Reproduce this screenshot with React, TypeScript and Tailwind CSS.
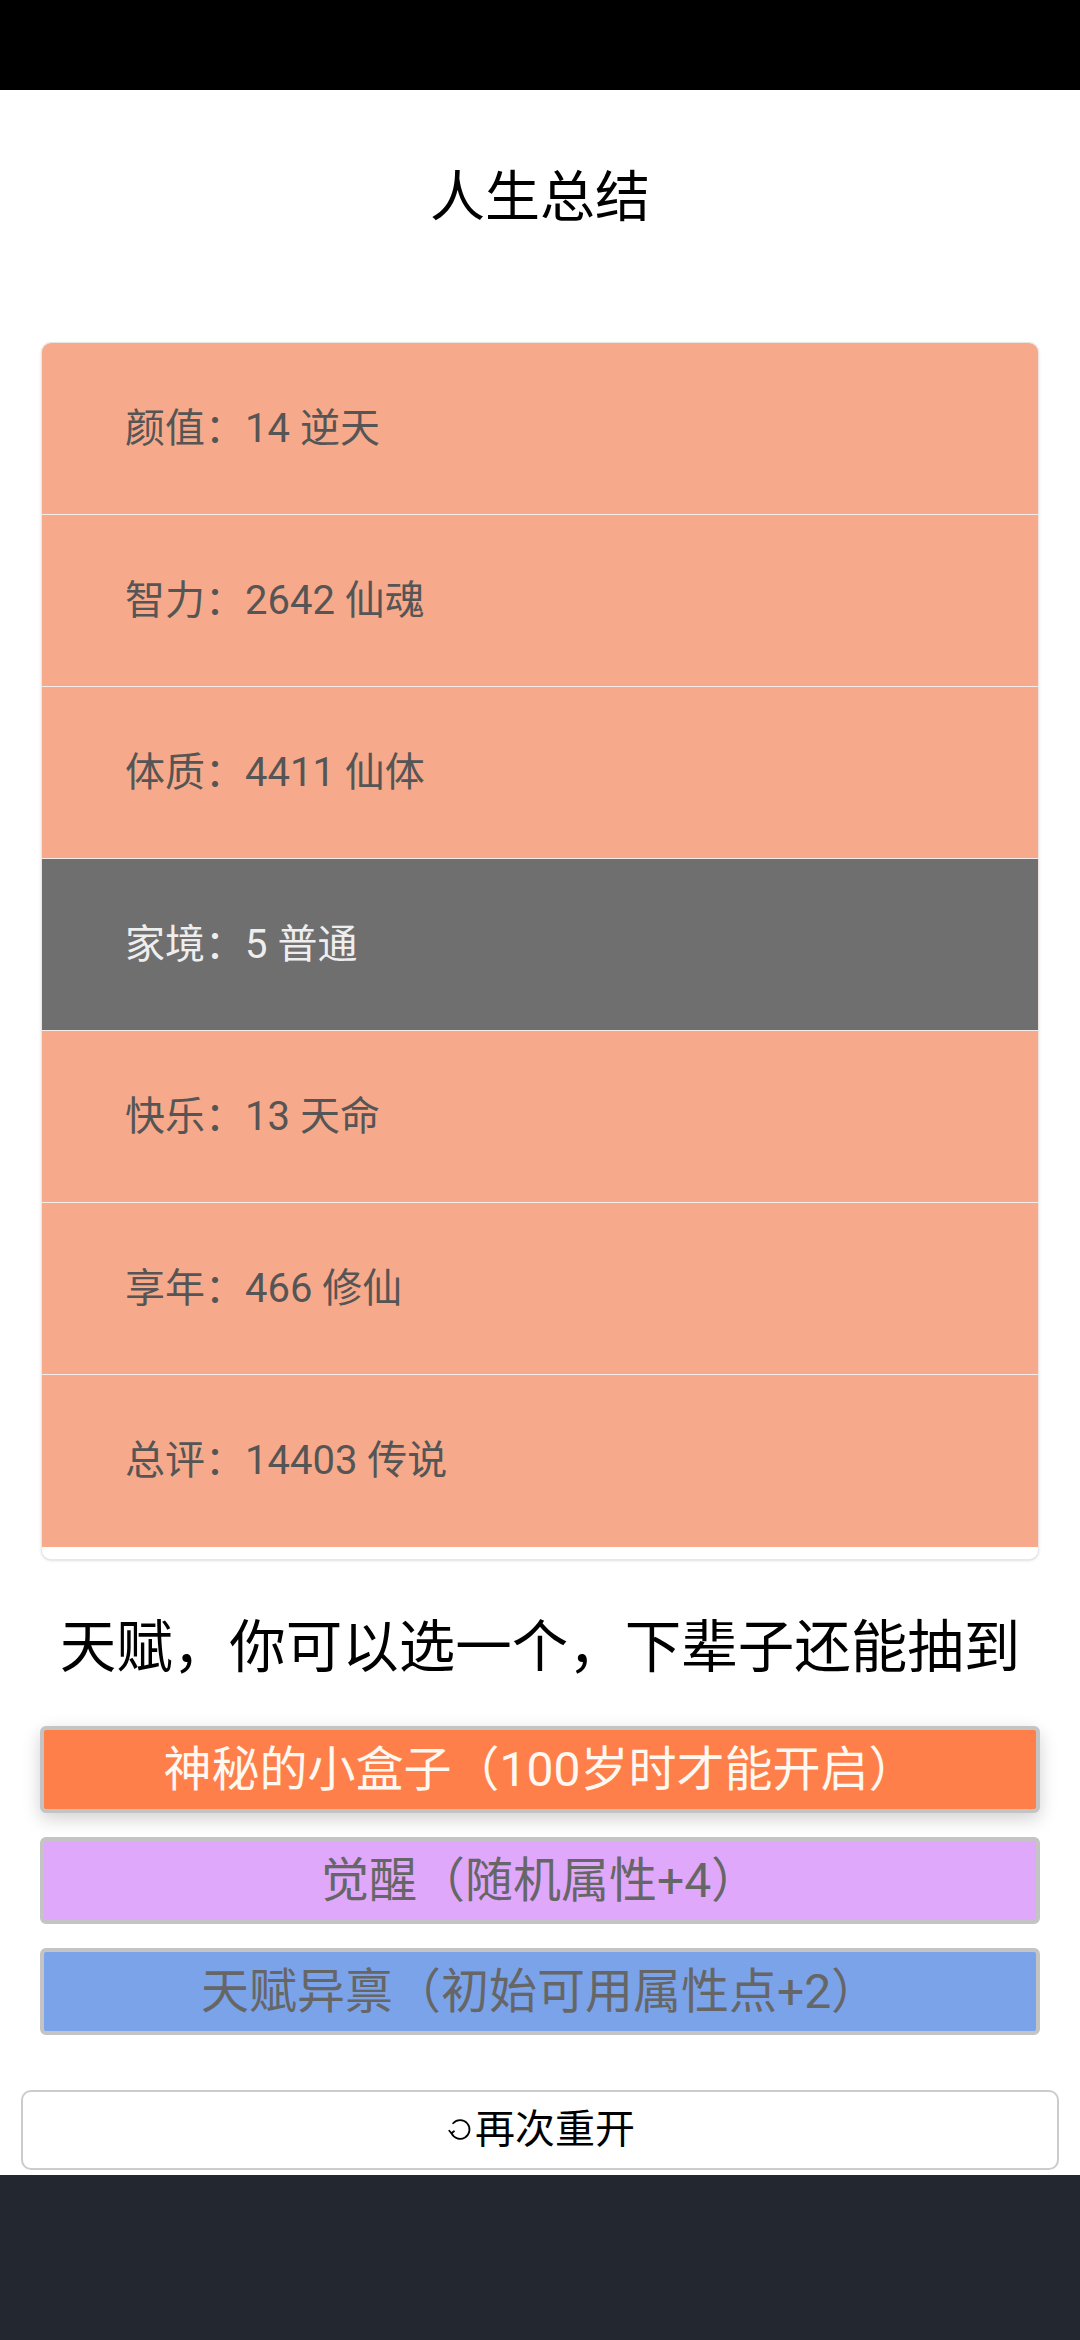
import React from "react";

const stats = [
  { label: "颜值", value: "14 逆天", grade: 4 },
  { label: "智力", value: "2642 仙魂", grade: 4 },
  { label: "体质", value: "4411 仙体", grade: 4 },
  { label: "家境", value: "5 普通", grade: 0 },
  { label: "快乐", value: "13 天命", grade: 4 },
  { label: "享年", value: "466 修仙", grade: 4 },
  { label: "总评", value: "14403 传说", grade: 4 },
];

const talents = [
  { name: "神秘的小盒子（100岁时才能开启）", cls: "bg-[#FF7F4B] text-[#FFF8F0]", selected: true },
  { name: "觉醒（随机属性+4）", cls: "bg-[#E0A8FB] text-[#666666]", selected: false },
  { name: "天赋异禀（初始可用属性点+2）", cls: "bg-[#7BA3E9] text-[#666666]", selected: false },
];

const RestartIcon = () => (
  <svg width="30" height="30" viewBox="0 0 24 24" fill="none" stroke="currentColor" strokeWidth="1.4" strokeLinecap="round">
    {/* open circle with small arrow at lower left */}
    <path d="M5.2 14.5A7.5 7.5 0 1 0 6.5 6.6" />
    <path d="M3.4 12.6L5.2 14.6L7.2 13" />
  </svg>
);

export default function App() {
  return (
    <div
      className="w-[1080px] h-[2340px] flex flex-col bg-white overflow-hidden"
      style={{ fontFamily: "Roboto, 'Noto Sans CJK SC', sans-serif" }}
    >
      {/* status bar */}
      <div className="h-[90px] bg-black shrink-0" />

      <div className="flex-1 flex flex-col">
        <h1 className="mt-[66px] text-center text-[55px] leading-[82px] text-black font-normal">人生总结</h1>

        {/* summary card */}
        <div className="mt-[104px] mx-[41px] rounded-[10px] border border-[#ebe6e3] shadow-sm overflow-hidden pb-[12px] bg-white">
          {stats.map((s, i) => (
            <div
              key={s.label}
              className={`h-[172px] flex items-center pl-[83px] text-[40px] border-b border-[#f4ece8] ${
                s.grade === 0 ? "bg-[#6F6F6F] text-[#EEEEEE]" : "bg-[#F6AA8B] text-[#555555]"
              } ${i === stats.length - 1 ? "border-b-0" : ""}`}
            >
              {s.label}：{s.value}
            </div>
          ))}
        </div>

        <h2 className="mt-[46px] text-center text-[56.5px] leading-[84px] text-black font-normal">
          天赋，你可以选一个，下辈子还能抽到
        </h2>

        {/* talent choices */}
        <div className="mt-[36px] mx-[40px] flex flex-col gap-[24px]">
          {talents.map((t) => (
            <button
              key={t.name}
              className={`h-[87px] w-full rounded-[6px] border-[4px] border-[#C4C4C4] flex items-center justify-center text-[48px] ${t.cls} ${
                t.selected ? "shadow-[0_6px_18px_rgba(0,0,0,0.18)]" : ""
              }`}
            >
              {t.name}
            </button>
          ))}
        </div>

        <button className="mt-[55px] mx-[21px] h-[80px] rounded-[10px] border-2 border-[#CCCCCC] bg-white flex items-center justify-center text-[40px] text-black">
          <RestartIcon />
          再次重开
        </button>
      </div>

      {/* navigation bar */}
      <div className="h-[165px] bg-[#222730] shrink-0" />
    </div>
  );
}
